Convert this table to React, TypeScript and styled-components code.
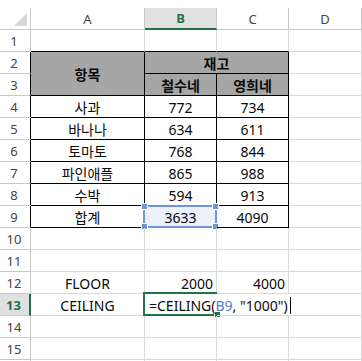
import styled, { createGlobalStyle } from "styled-components";

const GRID = "#d9d9d9";
const HEAD_LINE = "#c8c8c8";
const BLACK = "#000";
const GREEN = "#217346";
const BLUE = "#6f96dc";
const HEAD_FILL = "#a6a6a6";

const GlobalStyle = createGlobalStyle`
  html, body {
    margin: 0;
    padding: 0;
    background: #fff;
    overflow: hidden;
  }
  body {
    font-family: "Noto Sans", "Noto Sans CJK KR", sans-serif;
  }
`;

const Sheet = styled.div`
  display: grid;
  grid-template-columns: 31px 114px 72px 72px 73px;
  grid-auto-rows: 22px;
  padding-top: 8px;
  height: 361px;
  box-sizing: border-box;
  overflow: hidden;
`;

type Align = "left" | "center" | "right";

type CellProps = {
  $align?: Align;
  $bold?: boolean;
  $fill?: string;
  $right?: string;
  $bottom?: string;
  $cols?: number;
  $rows?: number;
};

const justify = (a?: Align) =>
  a === "left" ? "flex-start" : a === "right" ? "flex-end" : "center";

const Cell = styled.div<CellProps>`
  position: relative;
  box-sizing: border-box;
  display: flex;
  align-items: center;
  justify-content: ${(p) => justify(p.$align)};
  padding: 1px 3px 0;
  border-right: 1px solid ${(p) => p.$right ?? GRID};
  border-bottom: 1px solid ${(p) => p.$bottom ?? GRID};
  background: ${(p) => p.$fill ?? "transparent"};
  grid-column: span ${(p) => p.$cols ?? 1};
  grid-row: span ${(p) => p.$rows ?? 1};
  font-size: 14px;
  font-weight: ${(p) => (p.$bold ? 700 : 400)};
  color: #0a0a0a;
  white-space: nowrap;
`;

const Corner = styled.div`
  box-sizing: border-box;
  display: flex;
  align-items: flex-end;
  justify-content: flex-end;
  padding: 0 3px 3px 0;
  border-right: 1px solid ${HEAD_LINE};
  border-bottom: 1px solid ${HEAD_LINE};
`;

const ColHead = styled.div<{ $active?: boolean }>`
  box-sizing: border-box;
  display: flex;
  align-items: center;
  justify-content: center;
  font-size: 13px;
  color: ${(p) => (p.$active ? GREEN : "#444")};
  font-weight: ${(p) => (p.$active ? 700 : 400)};
  background: ${(p) => (p.$active ? "#e1e1e1" : "#fff")};
  border-right: 1px solid ${HEAD_LINE};
  border-bottom: ${(p) => (p.$active ? `2px solid ${GREEN}` : `1px solid ${HEAD_LINE}`)};
`;

const RowHead = styled.div<{ $active?: boolean; $edge?: string }>`
  box-sizing: border-box;
  display: flex;
  align-items: center;
  justify-content: center;
  padding: 1px 2px 0 0;
  font-size: 13px;
  color: ${(p) => (p.$active ? GREEN : "#444")};
  font-weight: ${(p) => (p.$active ? 700 : 400)};
  background: ${(p) => (p.$active ? "#e1e1e1" : "#fff")};
  border-right: ${(p) =>
    p.$active ? `2px solid ${GREEN}` : `1px solid ${p.$edge ?? HEAD_LINE}`};
  border-bottom: 1px solid ${HEAD_LINE};
`;

const RefFrame = styled.div`
  position: absolute;
  top: -1px;
  left: -2px;
  right: -1px;
  bottom: -1px;
  border: 2px solid ${BLUE};
  background: #ebf0fb;
  z-index: 0;
`;

const Handle = styled.span<{ $x: "left" | "right"; $y: "top" | "bottom"; $color: string }>`
  position: absolute;
  width: 5px;
  height: 5px;
  background: ${(p) => p.$color};
  border: 1px solid #fff;
  ${(p) => p.$x}: -4px;
  ${(p) => p.$y}: -4px;
`;

const CellText = styled.span`
  position: relative;
  z-index: 1;
`;

const ActiveFrame = styled.div`
  position: absolute;
  top: -2px;
  left: -2px;
  right: -1px;
  bottom: -1px;
  border: 2px solid ${GREEN};
  border-right: none;
`;

const Formula = styled.span`
  position: relative;
  z-index: 2;
  margin-left: 1px;
`;

const Ref = styled.span`
  color: #4f7fd6;
`;

const Caret = styled.span`
  display: inline-block;
  width: 1px;
  height: 17px;
  margin-left: 2px;
  background: #000;
  vertical-align: -3px;
`;

const CornerMark = () => (
  <svg width="13" height="13" viewBox="0 0 13 13">
    <polygon points="13,0 13,13 0,13" fill="#d7d7d7" />
  </svg>
);

const stock: [string, number, number][] = [
  ["사과", 772, 734],
  ["바나나", 634, 611],
  ["토마토", 768, 844],
  ["파인애플", 865, 988],
  ["수박", 594, 913],
];

// row 16 only peeks in at the bottom edge, so no label there
const Empty = ({ n }: { n?: number }) => (
  <>
    <RowHead>{n}</RowHead>
    <Cell />
    <Cell />
    <Cell />
    <Cell />
  </>
);

const Row = ({ n, name, a, b }: { n: number; name: string; a: number; b: number }) => (
  <>
    <RowHead $edge={BLACK}>{n}</RowHead>
    <Cell $right={BLACK} $bottom={BLACK}>{name}</Cell>
    <Cell $right={BLACK} $bottom={BLACK}>{a}</Cell>
    <Cell $right={BLACK} $bottom={BLACK}>{b}</Cell>
    <Cell />
  </>
);

const App = () => {
  return (
    <>
      <GlobalStyle />
      <Sheet>
        <Corner>
          <CornerMark />
        </Corner>
        <ColHead>A</ColHead>
        <ColHead $active>B</ColHead>
        <ColHead>C</ColHead>
        <ColHead>D</ColHead>

        <RowHead>1</RowHead>
        <Cell $bottom={BLACK} />
        <Cell $bottom={BLACK} />
        <Cell $bottom={BLACK} />
        <Cell />

        <RowHead $edge={BLACK}>2</RowHead>
        <Cell $rows={2} $bold $fill={HEAD_FILL} $right={BLACK} $bottom={BLACK}>
          항목
        </Cell>
        <Cell $cols={2} $bold $fill={HEAD_FILL} $right={BLACK} $bottom={BLACK}>
          재고
        </Cell>
        <Cell />

        <RowHead $edge={BLACK}>3</RowHead>
        <Cell $bold $fill={HEAD_FILL} $right={BLACK} $bottom={BLACK}>
          철수네
        </Cell>
        <Cell $bold $fill={HEAD_FILL} $right={BLACK} $bottom={BLACK}>
          영희네
        </Cell>
        <Cell />

        {stock.map(([name, a, b], i) => (
          <Row key={name} n={i + 4} name={name} a={a} b={b} />
        ))}

        <RowHead $edge={BLACK}>9</RowHead>
        <Cell $right={BLACK} $bottom={BLACK}>합계</Cell>
        <Cell $right={BLACK} $bottom={BLACK}>
          <RefFrame>
            <Handle $x="left" $y="top" $color={BLUE} />
            <Handle $x="right" $y="top" $color={BLUE} />
            <Handle $x="left" $y="bottom" $color={BLUE} />
            <Handle $x="right" $y="bottom" $color={BLUE} />
          </RefFrame>
          <CellText>3633</CellText>
        </Cell>
        <Cell $right={BLACK} $bottom={BLACK}>4090</Cell>
        <Cell />

        <Empty n={10} />
        <Empty n={11} />

        <RowHead>12</RowHead>
        <Cell>FLOOR</Cell>
        <Cell $align="right">2000</Cell>
        <Cell $align="right">4000</Cell>
        <Cell />

        <RowHead $active>13</RowHead>
        <Cell>CEILING</Cell>
        <Cell $align="left" $right="transparent">
          <ActiveFrame>
            <Handle $x="right" $y="bottom" $color={GREEN} />
          </ActiveFrame>
          <Formula>
            =CEILING(<Ref>B9</Ref>, "1000")
            <Caret />
          </Formula>
        </Cell>
        <Cell $right="transparent" />
        <Cell />

        <Empty n={14} />
        <Empty n={15} />
        <Empty />
      </Sheet>
    </>
  );
};

export default App;
